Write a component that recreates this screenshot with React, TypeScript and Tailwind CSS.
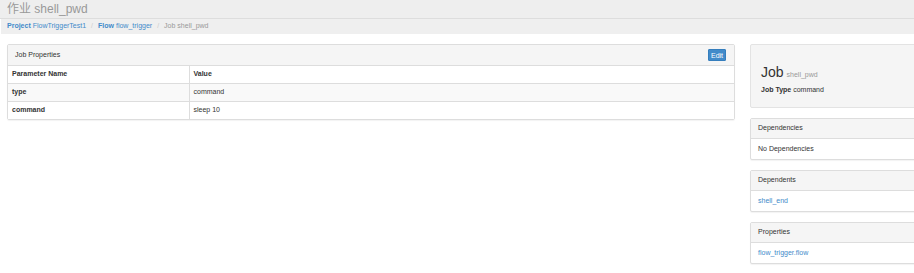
import React from 'react'

const font = { fontFamily: '"Liberation Sans", "Noto Sans CJK SC", sans-serif' }

function SidePanel({ title, children }: { title: string; children: React.ReactNode }) {
	return (
		<div className="border border-[#dddddd] rounded-[2px] bg-white shadow-[0_1px_1px_rgba(0,0,0,0.05)]">
			<div className="h-[20px] px-[7px] flex items-center bg-[#f5f5f5] border-b border-[#dddddd] text-[7px] text-[#333]">
				{title}
			</div>
			<div className="h-[20px] px-[7px] flex items-center text-[7px]">{children}</div>
		</div>
	)
}

export default function App() {
	const rows = [
		{ name: 'type', value: 'command' },
		{ name: 'command', value: 'sleep 10' },
	]

	return (
		<div style={font} className="w-[914px] h-[273px] overflow-hidden bg-white text-[#333]">
			<div className="h-[19px] bg-[#eeeeee] border-b border-[#dddddd] flex items-center px-[7px]">
				<h1 className="text-[12px] leading-none font-normal text-[#999]">作业 shell_pwd</h1>
			</div>
			<div className="h-[15px] ml-[1px] bg-[#efefef] flex items-center px-[6px] text-[7px]">
				<a className="text-[#428bca]">
					<b>Project</b> FlowTriggerTest1
				</a>
				<span className="px-[5px] text-[#ccc]">/</span>
				<a className="text-[#428bca]">
					<b>Flow</b> flow_trigger
				</a>
				<span className="px-[5px] text-[#ccc]">/</span>
				<span className="text-[#999]">Job shell_pwd</span>
			</div>

			<div className="flex gap-[15px] pl-[7px] pt-[10px]">
				<div className="w-[728px] shrink-0 self-start border border-[#dddddd] rounded-[2px] shadow-[0_1px_1px_rgba(0,0,0,0.05)]">
					<div className="h-[21px] bg-[#f5f5f5] border-b border-[#dddddd] flex items-center justify-between pl-[7px] pr-[8px]">
						<span className="text-[7px]">Job Properties</span>
						<button className="h-[12px] w-[18px] bg-[#428bca] border border-[#357ebd] rounded-[1px] text-white text-[7px] leading-none">
							Edit
						</button>
					</div>
					<table className="w-full border-collapse text-[7px]">
						<thead>
							<tr className="h-[17px]">
								<th className="w-[181px] text-left font-bold px-[4px] border-r border-b border-[#dddddd]">Parameter Name</th>
								<th className="text-left font-bold px-[4px] border-b border-[#dddddd]">Value</th>
							</tr>
						</thead>
						<tbody>
							{rows.map((r, i) => (
								<tr key={r.name} className={`h-[18px] ${i % 2 === 0 ? 'bg-[#f9f9f9]' : 'bg-white'}`}>
									<td className={`px-[4px] font-bold border-r border-[#dddddd] ${i < rows.length - 1 ? 'border-b' : ''}`}>{r.name}</td>
									<td className={`px-[4px] border-[#dddddd] ${i < rows.length - 1 ? 'border-b' : ''}`}>{r.value}</td>
								</tr>
							))}
						</tbody>
					</table>
				</div>

				<div className="w-[200px] shrink-0 flex flex-col gap-[10px]">
					<div className="h-[64px] bg-[#f5f5f5] border border-[#e3e3e3] rounded-[2px] px-[10px] flex flex-col justify-center">
						<div className="flex items-baseline gap-[3px] mt-[8px]">
							<span className="text-[14px] leading-none">Job</span>
							<span className="text-[7px] text-[#999]">shell_pwd</span>
						</div>
						<div className="text-[7px] mt-[4px]">
							<b>Job Type</b> command
						</div>
					</div>
					<SidePanel title="Dependencies">No Dependencies</SidePanel>
					<SidePanel title="Dependents">
						<a className="text-[#428bca]">shell_end</a>
					</SidePanel>
					<SidePanel title="Properties">
						<a className="text-[#428bca]">flow_trigger.flow</a>
					</SidePanel>
				</div>
			</div>
		</div>
	)
}
